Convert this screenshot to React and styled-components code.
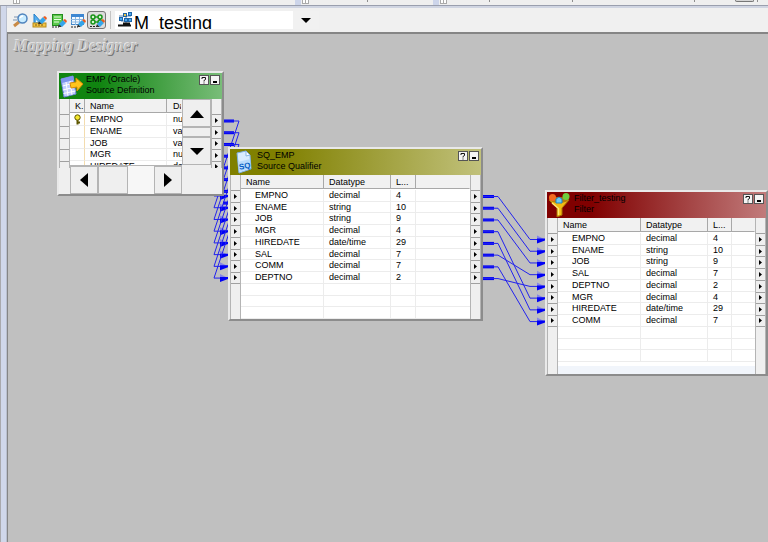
import React from "react";
import styled, { createGlobalStyle, css } from "styled-components";

const GlobalStyle = createGlobalStyle`
  * { box-sizing: border-box; }
  body { margin: 0; background: #c0c0c0; }
  button, select { font: inherit; color: inherit; }
`;

const uiFont = `"Liberation Sans", Arial, sans-serif`;

const Shell = styled.div`
  min-height: 100vh;
  display: flex;
  flex-direction: column;
  overflow: hidden;
  font-family: ${uiFont};
  font-size: 9px;
  color: #000;
`;

const UpperBars = styled.div`
  display: grid;
  grid-template-columns: 12px 283px 138px 1fr;
  height: 6px;
  background: #efefef;
  border-bottom: 1px solid #9a9fae;
`;

const BarSegment = styled.div`
  display: flex;
  align-items: flex-start;
  border-left: ${(p) => (p.$plain ? "0" : "6px solid #cdd5ea")};
`;

const Grip = styled.span`
  width: 7px;
  height: 4px;
  margin-left: 1px;
  border: 1px solid #aaa;
  border-top: 0;
  background: linear-gradient(90deg, #fff 2px, #aaa 2px, #aaa 3px, #fff 3px);
`;

const BarTick = styled.span`
  width: 1px;
  height: 2px;
  margin-left: ${(p) => p.$gap}px;
  background: #8e8e8e;
`;

const BarButton = styled.span`
  width: 19px;
  height: 2px;
  margin-left: 40px;
  border: 1px solid #777;
  border-top: 0;
  border-radius: 0 0 3px 3px;
  background: #d5d5d5;
`;

const Main = styled.div`
  flex: 1;
  display: grid;
  grid-template-columns: 7px 1fr;
`;

const DockEdge = styled.div`
  background: #d0d7ea;
  border-left: 1px solid #a9a9ad;
  border-right: 1px solid #b9bfce;
`;

const Workspace = styled.div`
  display: flex;
  flex-direction: column;
  min-width: 0;
`;

const Toolbar = styled.div`
  display: flex;
  align-items: center;
  height: 26px;
  padding-left: 4px;
  background: #f0f0f0;
  border-top: 2px solid #d0d5e2;
`;

const ToolButton = styled.button`
  display: grid;
  place-items: center;
  width: 19px;
  height: 18px;
  padding: 0;
  border: 1px solid ${(p) => (p.$on ? "#777" : "transparent")};
  border-radius: 3px;
  background: ${(p) => (p.$on ? "#dcdcdc" : "transparent")};
`;

const Divider = styled.span`
  width: 1px;
  height: 18px;
  margin: 0 4px;
  background: #c4c4c4;
`;

const Picker = styled.label`
  display: flex;
  align-items: stretch;
  width: 204px;
  height: 18px;
  padding-left: 3px;
  overflow: hidden;
  background: #fff;
`;

const PickerSelect = styled.select`
  appearance: none;
  flex: 1;
  min-width: 0;
  height: 24px;
  margin: 0;
  padding: 0;
  border: 0;
  background: transparent;
  font-size: 18px;
  line-height: 24px;
  color: #000;
`;

const PickerArrow = styled.span`
  display: grid;
  place-items: center;
  width: 26px;
  background: #f1f1f1;
`;

const Canvas = styled.main`
  position: relative;
  flex: 1;
  background: #c0c0c0;
  border-top: 2px solid #858585;
  border-left: 1px solid #858585;
`;

const CanvasTitle = styled.h1`
  margin: 0;
  padding: 2px 0 0 6px;
  font: italic bold 16px/20px "Liberation Serif", "Times New Roman", serif;
  color: #c0c0c0;
  text-shadow: -1px -1px 0 #e4e4e4, 1px 1px 0 #777;
`;

const Links = styled.svg`
  position: absolute;
  inset: 0;
  width: 100%;
  height: 100%;
  pointer-events: none;
`;

const NodeWindow = styled.section`
  position: absolute;
  left: ${(p) => p.$x}px;
  top: ${(p) => p.$y}px;
  width: ${(p) => p.$w}px;
  border: 2px solid;
  border-color: #e9e9e9 #8c8c8c #8c8c8c #e9e9e9;
  background: #efefef;
`;

const NodeHeader = styled.header`
  display: flex;
  align-items: flex-start;
  height: 26px;
  padding: 1px 2px 0 1px;
  background: linear-gradient(90deg, ${(p) => p.$from} ${(p) => p.$hold}, ${(p) => p.$to});
`;

const NodeTitle = styled.h2`
  flex: 1;
  min-width: 0;
  margin: 0 0 0 2px;
  font-size: 9px;
  font-weight: 400;
  line-height: 11px;
  white-space: pre-line;
`;

const HeaderButton = styled.button`
  display: grid;
  place-items: center;
  width: 10px;
  height: 10px;
  margin: 1px 0 0 1px;
  padding: 0;
  border: 1px solid #555;
  background: #f4f4f4;
`;

const NodeBody = styled.div`
  display: grid;
  grid-template-columns: 11px 1fr 11px;
  height: ${(p) => p.$h}px;
  overflow: hidden;
`;

const rowTracks = css`
  display: grid;
  grid-template-rows: repeat(${(p) => p.$rows}, minmax(0, 1fr));
  height: ${(p) => (p.$rows === 11 ? 129 : 94)}px;
`;

const Gutter = styled.div`
  padding-top: 15px;
  background: #efefef;
  border: solid #b4b4b4;
  border-width: 0 1px;
  overflow: hidden;
  max-height: ${(p) => (p.$clip ? `${p.$clip}px` : "none")};
`;

const Ports = styled.div`
  ${rowTracks}
`;

const Port = styled.span`
  display: grid;
  place-items: center;
  min-height: 0;
  border-top: 1px solid #a0a0a0;
  &:last-child { border-bottom: 1px solid #a0a0a0; }
`;

const Sheet = styled.div`
  display: grid;
  grid-template-columns: 1fr ${(p) => (p.$scroll ? "29px" : "0")};
  grid-template-rows: ${(p) => (p.$scroll ? "66px 29px" : "1fr")};
  min-width: 0;
  background: #fff;
  overflow: hidden;
`;

const TableClip = styled.div`
  overflow: hidden;
  min-width: 0;
`;

const Table = styled.table`
  display: block;
`;

const Head = styled.thead`
  display: block;
`;

const Rows = styled.tbody`
  ${rowTracks}
`;

const Row = styled.tr`
  display: grid;
  grid-template-columns: ${(p) => p.$cols};
  min-height: 0;
`;

const HeadCell = styled.th`
  height: 14px;
  margin-bottom: 1px;
  padding: 0 0 0 ${(p) => p.$pad}px;
  overflow: hidden;
  background: #f1f1f1;
  border-right: 1px solid ${(p) => (p.$last ? "transparent" : "#a8a8a8")};
  border-bottom: 1px solid #a8a8a8;
  font-weight: 400;
  line-height: 14px;
  text-align: left;
  white-space: nowrap;
`;

const Cell = styled.td`
  min-height: 0;
  padding: 0 0 0 ${(p) => p.$pad}px;
  border-right: 1px solid ${(p) => (p.$keyed ? "#f3dcae" : "#ececec")};
  border-bottom: 1px solid #ececec;
  line-height: 11px;
  white-space: nowrap;
  &:last-child { border-right: 0; }
`;

const FooterStrip = styled.div`
  height: 8px;
  margin-top: 4px;
  background: #f1f5fb;
`;

const ScrollColumn = styled.div`
  display: grid;
  grid-template-rows: 28px 1fr 28px;
  background: #f5f5f5;
`;

const ScrollRow = styled.div`
  display: grid;
  grid-template-columns: 28px 30px 1fr 28px;
  background: #f7f7f7;
  border-top: 1px solid #b4b4b4;
`;

const ScrollButton = styled.button`
  display: grid;
  place-items: center;
  padding: 0;
  border: 1px solid #b4b4b4;
  background: #efefef;
`;

const ScrollCorner = styled.div`
  background: #efefef;
`;

const KeyIcon = styled.svg`
  display: block;
`;

const PortIcon = () => (
  <svg width="3" height="5" aria-hidden="true"><path d="M0 0L3 2.5L0 5Z" fill="#000" /></svg>
);

const Pencil = ({ x = 7, y = 6 }) => (
  <g transform={`translate(${x} ${y})`}>
    <path d="M0 8L1 5L4 8Z" fill="#333" />
    <path d="M1 5L5 1L8 4L4 8Z" fill="#35a5ea" />
    <path d="M5 1L7 0L9 2L8 4Z" fill="#ee5b1c" />
  </g>
);

const MagnifyIcon = () => (
  <svg width="16" height="15">
    <path d="M1 13L6 9" stroke="#c98a45" strokeWidth="3" />
    <path d="M1 4H5M0 7H4" stroke="#7a93b0" />
    <circle cx="9.500" cy="5.500" r="4.500" fill="#c9ecff" stroke="#4f83bd" strokeWidth="1.500" />
    <path d="M7 5Q8 3 10 3" stroke="#fff" strokeWidth="1.500" fill="none" />
  </svg>
);
const RulerIcon = () => (
  <svg width="16" height="15">
    <path d="M2 1V11H11Z" fill="#55aef0" stroke="#257fc9" />
    <path d="M4 7V9H6Z" fill="#fff" />
    <rect x="1" y="10" width="13" height="4" fill="#f3c545" stroke="#b68a1d" />
    <path d="M4 11V13M7 11V13M10 11V13" stroke="#805c0b" />
    <Pencil x={6} y={3} />
  </svg>
);
const SheetIcon = () => (
  <svg width="16" height="15">
    <rect x="1.500" y="1.500" width="10" height="11" fill="#5cc94b" stroke="#238c20" />
    <path d="M3 4H10M3 6.500H10M3 9H8" stroke="#e8ffe3" />
    <path d="M1 14H8" stroke="#222" strokeDasharray="2 1" />
    <Pencil />
  </svg>
);
const GridIcon = () => (
  <svg width="16" height="15">
    <rect x="1.500" y="1.500" width="12" height="10" fill="#f3f9ff" stroke="#4287c9" />
    <path d="M1 2.500H14" stroke="#3d87d2" strokeWidth="3" />
    <path d="M1 6.500H14M1 9H14M5.500 4V12M9.500 4V12" stroke="#8bb8e2" />
    <path d="M1 14H8" stroke="#222" strokeDasharray="2 1" />
    <Pencil />
  </svg>
);
const MappingIcon = () => (
  <svg width="16" height="15">
    <path d="M4 4H12M4 9H12M4 4V9M11 4V9" stroke="#28a428" strokeWidth="1.500" />
    <g fill="#d4f5cf" stroke="#189318" strokeWidth="1.500">
      <circle cx="4" cy="4" r="2" /><circle cx="11" cy="4" r="2" />
      <circle cx="4" cy="9" r="2" /><circle cx="11" cy="9" r="2" />
    </g>
    <path d="M1 13.500H8" stroke="#222" strokeDasharray="2 1" />
    <Pencil />
  </svg>
);
const FlowIcon = () => (
  <svg width="16" height="18" aria-hidden="true">
    <path d="M1 5H13M3 10H13M8 2V13" stroke="#5c86b5" />
    <g stroke="#1e65a8">
      <rect x="1.500" y="6.500" width="3" height="3" fill="#4ba8ee" />
      <rect x="5.500" y="2.500" width="3" height="3" fill="#e8c34b" />
      <rect x="10.500" y="1.500" width="3" height="3" fill="#4ba8ee" />
      <rect x="6.500" y="7.500" width="3" height="3" fill="#4ba8ee" />
      <rect x="10.500" y="7.500" width="3" height="3" fill="#4ba8ee" />
    </g>
    <path d="M0 14.500H13M5 12.500H12" stroke="#111" strokeWidth="2" />
  </svg>
);

const SourceIcon = () => (
  <svg width="24" height="24" aria-hidden="true">
    <path d="M1 5L13 2L16 20L4 23Z" fill="#c3d0ff" stroke="#6f82de" />
    <path d="M1 5L13 2L14 6L2 9Z" fill="#7f96ee" />
    <path d="M2.500 12L14.500 9M3 16L15 13M3.500 19.500L15.500 17M6 8L8 22M10 7L12 21" stroke="#fff" />
    <path d="M10 9L16 8V4L23 10L17 17V13L11 14Z" fill="#ffc51c" stroke="#d48806" />
  </svg>
);
const QualifierIcon = () => (
  <svg width="24" height="24" aria-hidden="true">
    <path d="M6 3L15 1L19 5L20 19L8 23Z" fill="#d9ecff" stroke="#7eb0e4" />
    <path d="M15 1V6L19 5Z" fill="#fff" stroke="#86b4e2" />
    <path d="M7 12L19 9L20 18L8 22Z" fill="#b9dcfb" />
    <text x="8" y="19" fontSize="8" fontWeight="700" fill="#075ec4" fontFamily="Liberation Sans, sans-serif" transform="rotate(-10 12 16)">SQ</text>
  </svg>
);
const FilterIcon = () => (
  <svg width="24" height="24" aria-hidden="true">
    <path d="M1 7Q11 3 21 7L14 15V22L9 24V15Z" fill="#f2bb12" stroke="#a86f06" />
    <ellipse cx="11" cy="7" rx="9" ry="3" fill="#b57d0a" />
    <path d="M4 10L10.500 15.500V22" stroke="#ffe875" strokeWidth="1.500" fill="none" />
    <circle cx="4.500" cy="4.500" r="3.500" fill="#f36b21" />
    <circle cx="18" cy="3.500" r="3.500" fill="#6fcf3d" />
    <path d="M8 6L11 4L14 6V10H8Z" fill="#6ccbf5" stroke="#1f84bd" />
  </svg>
);

const KeyCell = () => (
  <KeyIcon width="9" height="11" aria-label="Key">
    <path d="M4.500 5V10.500M5 8.500H7" stroke="#5d5600" strokeWidth="2" />
    <circle cx="4.500" cy="3.500" r="2.700" fill="#f4e62c" stroke="#5d5600" />
  </KeyIcon>
);

const arrows = {
  up: "M0 8L7 0L14 8Z",
  down: "M0 0H14L7 7Z",
  left: "M8 0V14L0 7Z",
  right: "M0 0L8 7L0 14Z",
};
const Arrow = ({ dir }) => (
  <svg width="14" height="14" aria-hidden="true">
    <path d={arrows[dir]} transform={dir === "up" || dir === "down" ? "translate(0 4)" : "translate(3 0)"} />
  </svg>
);

const sqFields = [
  ["EMPNO", "decimal", "4"], ["ENAME", "string", "10"], ["JOB", "string", "9"],
  ["MGR", "decimal", "4"], ["HIREDATE", "date/time", "29"], ["SAL", "decimal", "7"],
  ["COMM", "decimal", "7"], ["DEPTNO", "decimal", "2"],
];
const filterFields = [0, 1, 2, 5, 7, 3, 4, 6].map((i) => sqFields[i]);
const empFields = [
  [<KeyCell key="k" />, "EMPNO", "number"], ["", "ENAME", "varchar2"], ["", "JOB", "varchar2"],
  ["", "MGR", "number"], ["", "HIREDATE", "date"],
];

const nodes = [
  {
    title: "EMP (Oracle)\nSource Definition", Icon: SourceIcon, x: 49, y: 37, w: 167, h: 95,
    from: "#108410", hold: "25%", to: "#79bd79", cols: "15px 82px 1fr", heads: ["K.", "Name", "Datatype"],
    headPads: [5, 5, 6], pads: [3, 5, 6], fields: empFields, rows: 8, portCount: 5, clip: 69, scroll: true,
  },
  {
    title: "SQ_EMP\nSource Qualifier", Icon: QualifierIcon, x: 220, y: 113, w: 255, h: 144,
    from: "#808000", hold: "20%", to: "#c1c17b", cols: "83px 67px 25px 1fr", heads: ["Name", "Datatype", "L...", ""],
    headPads: [5, 5, 5, 0], pads: [14, 5, 5, 0], fields: sqFields, rows: 11, portCount: 8,
  },
  {
    title: "Filter_testing\nFilter", Icon: FilterIcon, x: 537, y: 156, w: 223, h: 156,
    from: "#800000", hold: "20%", to: "#c17b7b", cols: "83px 67px 24px 1fr", heads: ["Name", "Datatype", "L...", ""],
    headPads: [5, 5, 5, 0], pads: [14, 5, 5, 0], fields: filterFields, rows: 11, portCount: 8, strip: true,
  },
];

const PortGutter = ({ node, blank }) => (
  <Gutter $clip={node.clip}>
    <Ports $rows={node.rows}>
      {Array.from({ length: node.portCount }, (_, i) => <Port key={i}>{!blank && <PortIcon />}</Port>)}
    </Ports>
  </Gutter>
);

function TransformationNode({ node }) {
  const blank = Array.from({ length: node.rows - node.fields.length }, () => node.heads.map(() => ""));
  return (
    <NodeWindow $x={node.x} $y={node.y} $w={node.w}>
      <NodeHeader $from={node.from} $to={node.to} $hold={node.hold}>
        <node.Icon />
        <NodeTitle>{node.title}</NodeTitle>
        <HeaderButton aria-label="Help">
          <svg width="6" height="8"><path d="M1 3V1.500H4.500V3.500L3 4.500V5.500M3 6.500V7.500" fill="none" stroke="#111" /></svg>
        </HeaderButton>
        <HeaderButton aria-label="Minimize">
          <svg width="6" height="8"><path d="M1 6H5" stroke="#000" strokeWidth="2" /></svg>
        </HeaderButton>
      </NodeHeader>
      <NodeBody $h={node.h}>
        <PortGutter node={node} blank={node.scroll} />
        <Sheet $scroll={node.scroll}>
          <TableClip>
            <Table>
              <Head>
                <Row $cols={node.cols}>
                  {node.heads.map((h, i) => (
                    <HeadCell key={i} $pad={node.headPads[i]} $last={i === node.heads.length - 1}>{h}</HeadCell>
                  ))}
                </Row>
              </Head>
              <Rows $rows={node.rows}>
                {[...node.fields, ...blank].map((field, r) => (
                  <Row key={r} $cols={node.cols}>
                    {node.heads.map((_, i) => (
                      <Cell key={i} $pad={node.pads[i]} $keyed={node.scroll && i === 0}>{field[i]}</Cell>
                    ))}
                  </Row>
                ))}
              </Rows>
            </Table>
            {node.strip && <FooterStrip />}
          </TableClip>
          {node.scroll && (
            <>
              <ScrollColumn>
                <ScrollButton aria-label="Scroll up"><Arrow dir="up" /></ScrollButton>
                <ScrollButton aria-label="Vertical thumb" />
                <ScrollButton aria-label="Scroll down"><Arrow dir="down" /></ScrollButton>
              </ScrollColumn>
              <ScrollRow>
                <ScrollButton aria-label="Scroll left"><Arrow dir="left" /></ScrollButton>
                <ScrollButton aria-label="Horizontal thumb" />
                <span />
                <ScrollButton aria-label="Scroll right"><Arrow dir="right" /></ScrollButton>
              </ScrollRow>
              <ScrollCorner />
            </>
          )}
        </Sheet>
        <PortGutter node={node} />
      </NodeBody>
    </NodeWindow>
  );
}

const PITCH = 129 / 11;
const Link = ({ x1, y1, bend, back, x2, y2 }) => (
  <g>
    <path d={`M${x1} ${y1}H${x1 + 11}`} stroke="#0000f5" strokeWidth="3" />
    <path d={`M${x1} ${y1}H${bend}L${back} ${y2}H${x2}`} stroke="#2222ee" fill="none" />
    <path d={`M${x2 - 8} ${y2 - 4}L${x2} ${y2}H${x2 - 8}Z`} fill="#8585e6" />
    <path d={`M${x2 - 8} ${y2 - 1}H${x2}V${y2 + 1}L${x2 - 8} ${y2 + 4}Z`} fill="#0000f5" />
  </g>
);

const filterTargets = [0, 1, 2, 5, 6, 3, 7, 4];

export default function App() {
  return (
    <Shell>
      <GlobalStyle />
      <UpperBars>
        <BarSegment $plain />
        <BarSegment $plain><Grip /></BarSegment>
        <BarSegment><Grip /><BarTick $gap={58} /></BarSegment>
        <BarSegment>
          <Grip /><BarTick $gap={42} /><BarTick $gap={82} /><BarTick $gap={121} /><BarButton /><BarTick $gap={3} />
        </BarSegment>
      </UpperBars>
      <Main>
        <DockEdge />
        <Workspace>
          <Toolbar>
            <ToolButton aria-label="Source analyzer"><MagnifyIcon /></ToolButton>
            <ToolButton aria-label="Target designer"><RulerIcon /></ToolButton>
            <ToolButton aria-label="Transformation developer"><SheetIcon /></ToolButton>
            <ToolButton aria-label="Mapplet designer"><GridIcon /></ToolButton>
            <ToolButton aria-label="Mapping designer" $on><MappingIcon /></ToolButton>
            <Divider />
            <Picker>
              <FlowIcon />
              <PickerSelect aria-label="Mapping" defaultValue="M_testing">
                <option>M_testing</option>
              </PickerSelect>
              <PickerArrow><svg width="10" height="5"><path d="M0 0H10L5 5Z" /></svg></PickerArrow>
            </Picker>
          </Toolbar>
          <Canvas>
            <CanvasTitle>Mapping Designer</CanvasTitle>
            <Links aria-hidden="true">
              {sqFields.map((f, i) => (
                <Link key={f[0]} x1={215} y1={87 + i * PITCH} bend={231} back={206} x2={220} y2={162 + i * PITCH} />
              ))}
              {filterTargets.map((t, i) => (
                <Link key={i} x1={475} y1={162.5 + i * PITCH} bend={490} back={522} x2={537} y2={205.5 + t * PITCH} />
              ))}
            </Links>
            {nodes.map((node) => <TransformationNode key={node.title} node={node} />)}
          </Canvas>
        </Workspace>
      </Main>
    </Shell>
  );
}
